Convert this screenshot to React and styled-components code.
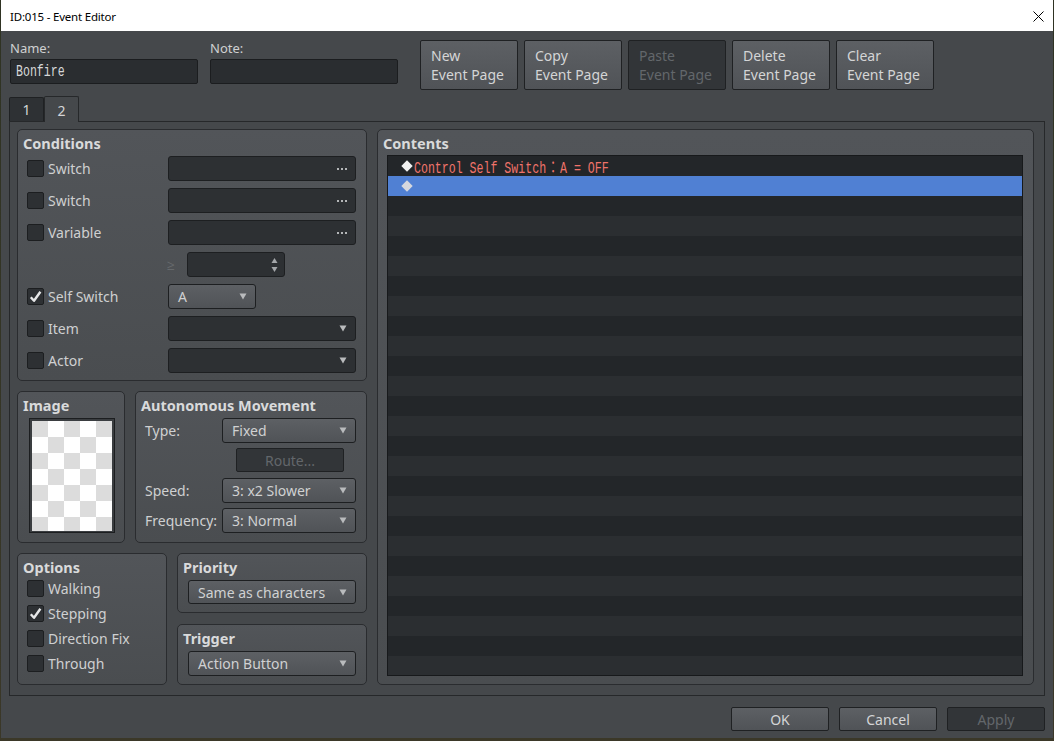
import React from 'react';
import styled, { createGlobalStyle, css } from 'styled-components';

const GlobalStyle = createGlobalStyle`
  html, body { margin: 0; padding: 0; background: #34362a; }
  body { font-family: "Noto Sans", "Open Sans", sans-serif; }
  #root { width: 1054px; height: 741px; overflow: hidden; }
  *, *::before, *::after { box-sizing: border-box; }
`;

const Desktop = styled.div`
  width: 1054px;
  height: 741px;
  padding-left: 1px;
  background: linear-gradient(180deg, #2f3323 0%, #3b3828 100%);
`;

const Window = styled.div`
  width: 1052px;
  height: 738px;
  display: flex;
  flex-direction: column;
  background: #45484b;
  color: #cfd0d1;
`;

const TitleBar = styled.div`
  height: 31px;
  flex: none;
  background: #ffffff;
  display: flex;
  align-items: center;
  justify-content: space-between;
  padding: 1px 9px 0 9px;
  font-family: "Noto Sans", sans-serif;
  font-size: 11.5px;
  letter-spacing: -0.2px;
  color: #000;
`;

const TopRow = styled.div`
  height: 65px;
  flex: none;
  display: flex;
  align-items: flex-start;
  padding: 9px 0 0 9px;
`;

const Field = styled.div`
  width: 188px;
  display: flex;
  flex-direction: column;
  margin-right: ${(p) => p.$gap}px;
`;

const FieldLabel = styled.div`
  font-size: 13px;
  line-height: 16px;
  color: #cfd0d1;
`;

const LineEdit = styled.div`
  margin-top: 3px;
  height: 25px;
  background: #2a2d30;
  border: 1px solid #1b1d1f;
  border-radius: 2px;
  padding-left: 5px;
  display: flex;
  align-items: center;
  overflow: hidden;
`;

const Mono = styled.span`
  display: inline-block;
  white-space: pre;
  font-family: "Liberation Mono", "DejaVu Sans Mono", monospace;
  font-size: 16px;
  line-height: 18px;
  padding-top: ${(p) => p.$nudge ?? 0}px;
  transform: scaleX(0.724);
  transform-origin: left center;
  color: ${(p) => p.$color || '#d6d7d8'};
`;

const WideChar = styled.span`
  font-family: "Noto Sans CJK JP", monospace;
  margin: 0 1.6px;
`;

const ButtonRow = styled.div`
  display: flex;
  gap: 6px;
`;

const buttonBase = css`
  border: 1px solid #1f2123;
  border-radius: 2px;
  font-family: "Noto Sans", sans-serif;
  font-size: 14px;
  color: ${(p) => (p.$disabled ? '#63676b' : '#d4d5d6')};
  background: ${(p) =>
    p.$disabled ? '#323538' : 'linear-gradient(180deg, #5d6064 0%, #505357 100%)'};
`;

const PageButton = styled.div`
  ${buttonBase};
  width: 98px;
  height: 50px;
  padding: 5px 10px;
  line-height: 19px;
`;

const TabBar = styled.div`
  height: 25px;
  flex: none;
  display: flex;
  align-items: flex-end;
  padding-left: 8px;
`;

const Tab = styled.div`
  width: 35px;
  height: ${(p) => (p.$active ? 26 : 24)}px;
  margin-bottom: ${(p) => (p.$active ? -1 : 0)}px;
  position: relative;
  z-index: ${(p) => (p.$active ? 2 : 1)};
  background: ${(p) => (p.$active ? '#45484b' : '#2e3134')};
  border: 1px solid ${(p) => (p.$active ? '#26282a' : '#1f2123')};
  border-bottom: none;
  border-radius: 2px 2px 0 0;
  display: flex;
  align-items: center;
  justify-content: center;
  font-size: 14px;
  color: #d4d5d6;
  padding-top: ${(p) => (p.$active ? 1 : 0)}px;
`;

const Pane = styled.div`
  height: 575px;
  flex: none;
  margin: 0 8px;
  border: 1px solid #26282a;
  padding: 7px 10px 10px 7px;
  display: grid;
  grid-template-columns: 350px 1fr;
  column-gap: 10px;
`;

const LeftCol = styled.div`
  display: grid;
  grid-template-rows: 252px 152px 132px;
  row-gap: 10px;
`;

const SplitRow = styled.div`
  display: grid;
  grid-template-columns: ${(p) => p.$cols};
  column-gap: 10px;
`;

const Stack = styled.div`
  display: grid;
  grid-template-rows: 60px 61px;
  row-gap: 11px;
`;

const Group = styled.section`
  border: 1px solid #2a2c2f;
  border-radius: 5px;
  background: linear-gradient(180deg, #525559 0%, #4a4d50 100%);
  display: flex;
  flex-direction: column;
  padding: 0 10px 8px ${(p) => p.$padLeft ?? 9}px;
  min-height: 0;
`;

const GroupTitle = styled.div`
  height: 26px;
  flex: none;
  padding-top: 4px;
  margin-left: ${(p) => p.$shift ?? -4}px;
  font-size: 14.5px;
  line-height: 18px;
  font-weight: 700;
  color: #d9dadb;
  white-space: nowrap;
`;

const CondGrid = styled.div`
  display: grid;
  grid-template-columns: 141px 1fr;
  grid-auto-rows: 25px;
  row-gap: 7px;
`;

const CheckCell = styled.div`
  display: flex;
  align-items: center;
  gap: 4px;
  min-height: 17px;
  font-size: 14px;
  line-height: 17px;
  color: #cfd0d1;
  white-space: nowrap;
`;

const Box = styled.div`
  width: 17px;
  height: 17px;
  flex: none;
  background: #2d3033;
  border: 1px solid #1c1e20;
  border-radius: 2px;
  display: flex;
  align-items: center;
  justify-content: center;
`;

const Input = styled.div`
  height: 25px;
  width: ${(p) => (p.$width ? `${p.$width}px` : '100%')};
  background: ${(p) =>
    p.$tone === 'light' ? 'linear-gradient(180deg, #5d6064 0%, #505357 100%)' : '#2d3033'};
  border: 1px solid #1d1f21;
  border-radius: 3px;
  display: flex;
  align-items: center;
  justify-content: space-between;
  padding: 0 ${(p) => p.$padRight ?? 8}px 0 9px;
  font-size: 14px;
  color: #d0d1d2;
  white-space: nowrap;
`;

const SpinCell = styled.div`
  display: flex;
  align-items: center;
`;

const GeSign = styled.span`
  width: 20px;
  font-size: 14px;
  color: #66696c;
  margin-left: -1px;
`;

const ImageFrame = styled.div`
  width: 86px;
  height: 115px;
  margin-left: 2px;
  border: 1px solid #1c1e20;
  background: #3a3d40;
  padding: 2px 2px 1px 2px;
`;

const Checker = styled.div`
  width: 80px;
  height: 110px;
  background-color: #fff;
  background-image: conic-gradient(#ffffff 0 25%, #dcdcdc 0 50%, #ffffff 0 75%, #dcdcdc 0);
  background-size: 32px 32px;
`;

const MoveGrid = styled.div`
  display: grid;
  grid-template-columns: 77px 134px;
  grid-auto-rows: 24px;
  row-gap: 6px;
  align-items: center;
`;

const FormLabel = styled.div`
  font-size: 14px;
  color: #cfd0d1;
  white-space: nowrap;
`;

const RouteButton = styled.div`
  ${buttonBase};
  grid-column: 2;
  margin-left: 14px;
  width: 108px;
  height: 24px;
  display: flex;
  align-items: center;
  justify-content: center;
`;

const OptionList = styled.div`
  display: flex;
  flex-direction: column;
  gap: 8px;
`;

const ContentsGroup = styled(Group)`
  padding-right: 10px;
`;

const List = styled.div`
  flex: 1;
  margin-top: -1px;
  border: 1px solid #17191b;
  background: #25282b;
  overflow: hidden;
  display: flex;
  flex-direction: column;
`;

const ListRow = styled.div`
  height: 20px;
  flex: none;
  display: flex;
  align-items: center;
  padding-left: 13px;
  gap: 1px;
  background: ${(p) => (p.$selected ? '#5080d3' : p.$odd ? '#2b2e31' : '#232629')};
`;

const BottomBar = styled.div`
  margin-top: 11px;
  height: 24px;
  flex: none;
  display: flex;
  justify-content: flex-end;
  gap: 10px;
  padding-right: 8px;
`;

const DialogButton = styled.div`
  ${buttonBase};
  width: 98px;
  height: 24px;
  display: flex;
  align-items: center;
  justify-content: center;
`;

const Arrow = () => (
  <svg width="8" height="7" viewBox="0 0 8 7">
    <polygon points="0.5,0.5 7.5,0.5 4,6.5" fill="#b9bbbd" />
  </svg>
);

const Dots = () => (
  <svg width="10" height="2" viewBox="0 0 10 2">
    <rect x="0" y="0" width="2" height="2" fill="#b4b6b8" />
    <rect x="4" y="0" width="2" height="2" fill="#b4b6b8" />
    <rect x="8" y="0" width="2" height="2" fill="#b4b6b8" />
  </svg>
);

const SpinArrows = () => (
  <svg width="7" height="16" viewBox="0 0 7 16">
    <polygon points="0.5,6 3.5,1 6.5,6" fill="#a4a7aa" />
    <polygon points="0.5,10 6.5,10 3.5,15" fill="#a4a7aa" />
  </svg>
);

const CheckMark = () => (
  <svg width="13" height="13" viewBox="0 0 13 13">
    <path d="M1.8 7.2 L5 10.8 L11.4 1.8" fill="none" stroke="#e6e7e8" strokeWidth="2.4" strokeLinejoin="round" />
  </svg>
);

const CloseIcon = () => (
  <svg width="11" height="11" viewBox="0 0 11 11">
    <path d="M0.5 0.5 L10.5 10.5 M10.5 0.5 L0.5 10.5" stroke="#000" strokeWidth="1" />
  </svg>
);

const Diamond = ({ color }) => (
  <svg width="12" height="12" viewBox="0 0 12 12">
    <polygon points="6,0.3 11.7,6 6,11.7 0.3,6" fill={color} />
  </svg>
);

const Check = ({ checked, label }) => (
  <CheckCell>
    <Box>{checked && <CheckMark />}</Box>
    {label}
  </CheckCell>
);

const Combo = ({ value, tone = 'light', width }) => (
  <Input $tone={tone} $width={width}>
    <span>{value}</span>
    <Arrow />
  </Input>
);

const pageButtons = [
  { top: 'New', disabled: false },
  { top: 'Copy', disabled: false },
  { top: 'Paste', disabled: true },
  { top: 'Delete', disabled: false },
  { top: 'Clear', disabled: false },
];

const rows = Array.from({ length: 26 }, (_, i) => i);

export default function App() {
  return (
    <>
      <GlobalStyle />
      <Desktop>
        <Window>
          <TitleBar>
            <span>ID:015 - Event Editor</span>
            <CloseIcon />
          </TitleBar>

          <TopRow>
            <Field $gap={12}>
              <FieldLabel>Name:</FieldLabel>
              <LineEdit>
                <Mono>Bonfire</Mono>
              </LineEdit>
            </Field>
            <Field $gap={22}>
              <FieldLabel>Note:</FieldLabel>
              <LineEdit />
            </Field>
            <ButtonRow>
              {pageButtons.map((b) => (
                <PageButton key={b.top} $disabled={b.disabled}>
                  {b.top}
                  <br />
                  Event Page
                </PageButton>
              ))}
            </ButtonRow>
          </TopRow>

          <TabBar>
            <Tab>1</Tab>
            <Tab $active>2</Tab>
          </TabBar>

          <Pane>
            <LeftCol>
              <Group>
                <GroupTitle>Conditions</GroupTitle>
                <CondGrid>
                  <Check label="Switch" />
                  <Input><span /><Dots /></Input>
                  <Check label="Switch" />
                  <Input><span /><Dots /></Input>
                  <Check label="Variable" />
                  <Input><span /><Dots /></Input>
                  <div />
                  <SpinCell>
                    <GeSign>≥</GeSign>
                    <Input $width={98} $padRight={6}><span /><SpinArrows /></Input>
                  </SpinCell>
                  <Check checked label="Self Switch" />
                  <Combo value="A" width={88} />
                  <Check label="Item" />
                  <Combo value="" tone="dark" />
                  <Check label="Actor" />
                  <Combo value="" tone="dark" />
                </CondGrid>
              </Group>

              <SplitRow $cols="108px 232px">
                <Group>
                  <GroupTitle>Image</GroupTitle>
                  <ImageFrame>
                    <Checker />
                  </ImageFrame>
                </Group>
                <Group>
                  <GroupTitle>Autonomous Movement</GroupTitle>
                  <MoveGrid>
                    <FormLabel>Type:</FormLabel>
                    <Combo value="Fixed" />
                    <RouteButton $disabled>Route...</RouteButton>
                    <FormLabel>Speed:</FormLabel>
                    <Combo value="3: x2 Slower" />
                    <FormLabel>Frequency:</FormLabel>
                    <Combo value="3: Normal" />
                  </MoveGrid>
                </Group>
              </SplitRow>

              <SplitRow $cols="150px 190px">
                <Group>
                  <GroupTitle>Options</GroupTitle>
                  <OptionList>
                    <Check label="Walking" />
                    <Check checked label="Stepping" />
                    <Check label="Direction Fix" />
                    <Check label="Through" />
                  </OptionList>
                </Group>
                <Stack>
                  <Group $padLeft={10}>
                    <GroupTitle $shift={-5}>Priority</GroupTitle>
                    <Combo value="Same as characters" />
                  </Group>
                  <Group $padLeft={10}>
                    <GroupTitle $shift={-5}>Trigger</GroupTitle>
                    <Combo value="Action Button" />
                  </Group>
                </Stack>
              </SplitRow>
            </LeftCol>

            <ContentsGroup>
              <GroupTitle>Contents</GroupTitle>
              <List>
                {rows.map((i) => (
                  <ListRow key={i} $odd={i % 2 === 1} $selected={i === 1}>
                    {i === 0 && (
                      <>
                        <Diamond color="#f2f2f2" />
                        <Mono $color="#f0736a" $nudge={2}>
                          Control Self Switch<WideChar>：</WideChar>A = OFF
                        </Mono>
                      </>
                    )}
                    {i === 1 && <Diamond color="#d6d8de" />}
                  </ListRow>
                ))}
              </List>
            </ContentsGroup>
          </Pane>

          <BottomBar>
            <DialogButton>OK</DialogButton>
            <DialogButton>Cancel</DialogButton>
            <DialogButton $disabled>Apply</DialogButton>
          </BottomBar>
        </Window>
      </Desktop>
    </>
  );
}
